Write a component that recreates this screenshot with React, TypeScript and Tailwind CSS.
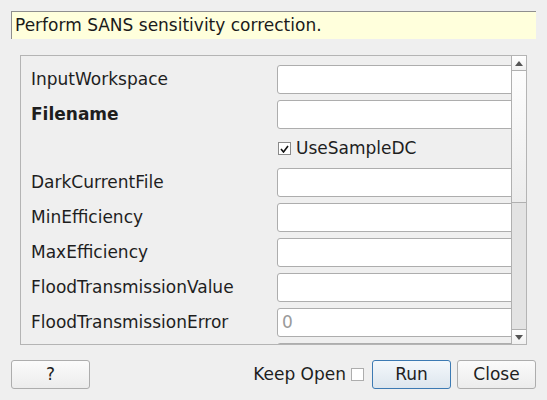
import React from 'react';

const font = { fontFamily: '"DejaVu Sans", "Liberation Sans", sans-serif' };

function Field({ value }: { value?: string }) {
  return (
    <div className="h-[29px] w-[250px] shrink-0 rounded-[3px] border border-[#adadad] bg-white pl-[4px] text-[17px] leading-[27px] text-[#9a9a9a]">
      {value}
    </div>
  );
}

function Row({ label, bold, value }: { label: string; bold?: boolean; value?: string }) {
  return (
    <div className="flex h-[29px] items-center">
      <div className={`w-[256px] shrink-0 pl-[10px] text-[17px] text-[#1e1e1e] ${bold ? 'font-bold' : ''}`}>{label}</div>
      <Field value={value} />
    </div>
  );
}

function Arrow({ up }: { up?: boolean }) {
  return (
    <div className="flex h-[14px] items-center justify-center bg-gradient-to-b from-white to-[#f1f1f1]">
      <svg width="8" height="5" viewBox="0 0 8 5">
        {up ? <path d="M0 5 L4 0 L8 5 Z" fill="#555" /> : <path d="M0 0 L8 0 L4 5 Z" fill="#555" />}
      </svg>
    </div>
  );
}

export default function App() {
  return (
    <div className="h-[400px] w-[547px] overflow-hidden bg-[#efefef]" style={font}>
      <div className="px-[11px] pt-[11px]">
        <div className="h-[28px] w-[525px] border-l border-t border-[#8f8f8f] border-b-[#ffffff] border-r-[#ffffff] bg-[#ffffdc] pl-[3px] text-[17px] leading-[26px] text-[#1a1a1a]">
          Perform SANS sensitivity correction.
        </div>
      </div>

      <div className="ml-[20px] mt-[16px] flex h-[290px] w-[507px] border border-[#b4b4b4]">
        <div className="relative flex-1 overflow-hidden">
          <div className="flex flex-col gap-[6px] pt-[9px]">
            <Row label="InputWorkspace" />
            <Row label="Filename" bold />
            <div className="flex h-[27px] items-center pl-[257px]">
              <div className="flex h-[13px] w-[13px] items-center justify-center border border-[#8a8a8a] bg-white">
                <svg width="9" height="8" viewBox="0 0 9 8">
                  <path d="M1 4 L3.5 7 L8 1" fill="none" stroke="#111" strokeWidth="1.6" />
                </svg>
              </div>
              <span className="ml-[5px] text-[17px] text-[#1e1e1e]">UseSampleDC</span>
            </div>
            <Row label="DarkCurrentFile" />
            <Row label="MinEfficiency" />
            <Row label="MaxEfficiency" />
            <Row label="FloodTransmissionValue" />
            <Row label="FloodTransmissionError" value="0" />
            <Row label="" />
          </div>
        </div>
        <div className="flex w-[15px] shrink-0 flex-col border-l border-[#b0b0b0]">
          <div className="border-b border-[#b0b0b0]">
            <Arrow up />
          </div>
          <div className="h-[132px] border-b border-[#b0b0b0] bg-gradient-to-b from-[#fdfdfd] to-[#ececec]" />
          <div className="flex-1 bg-[#e3e3e3]" />
          <div className="border-t border-[#b0b0b0]">
            <Arrow />
          </div>
        </div>
      </div>

      <div className="mt-[15px] flex items-center px-[11px]">
        <button className="h-[29px] w-[79px] rounded-[3px] border border-[#adadad] bg-gradient-to-b from-[#fbfbfb] to-[#ececec] text-[17px] text-[#1e1e1e]">
          ?
        </button>
        <div className="flex-1" />
        <span className="text-[17px] text-[#1e1e1e]">Keep Open</span>
        <div className="ml-[5px] h-[13px] w-[13px] border border-[#adadad] bg-white" />
        <button className="ml-[8px] h-[29px] w-[79px] rounded-[3px] border border-[#3c7ab3] bg-gradient-to-b from-[#f4f8fb] to-[#dde6ee] text-[17px] text-[#1e1e1e]">
          Run
        </button>
        <button className="ml-[6px] h-[29px] w-[79px] rounded-[3px] border border-[#adadad] bg-gradient-to-b from-[#fbfbfb] to-[#ececec] text-[17px] text-[#1e1e1e]">
          Close
        </button>
      </div>
    </div>
  );
}
